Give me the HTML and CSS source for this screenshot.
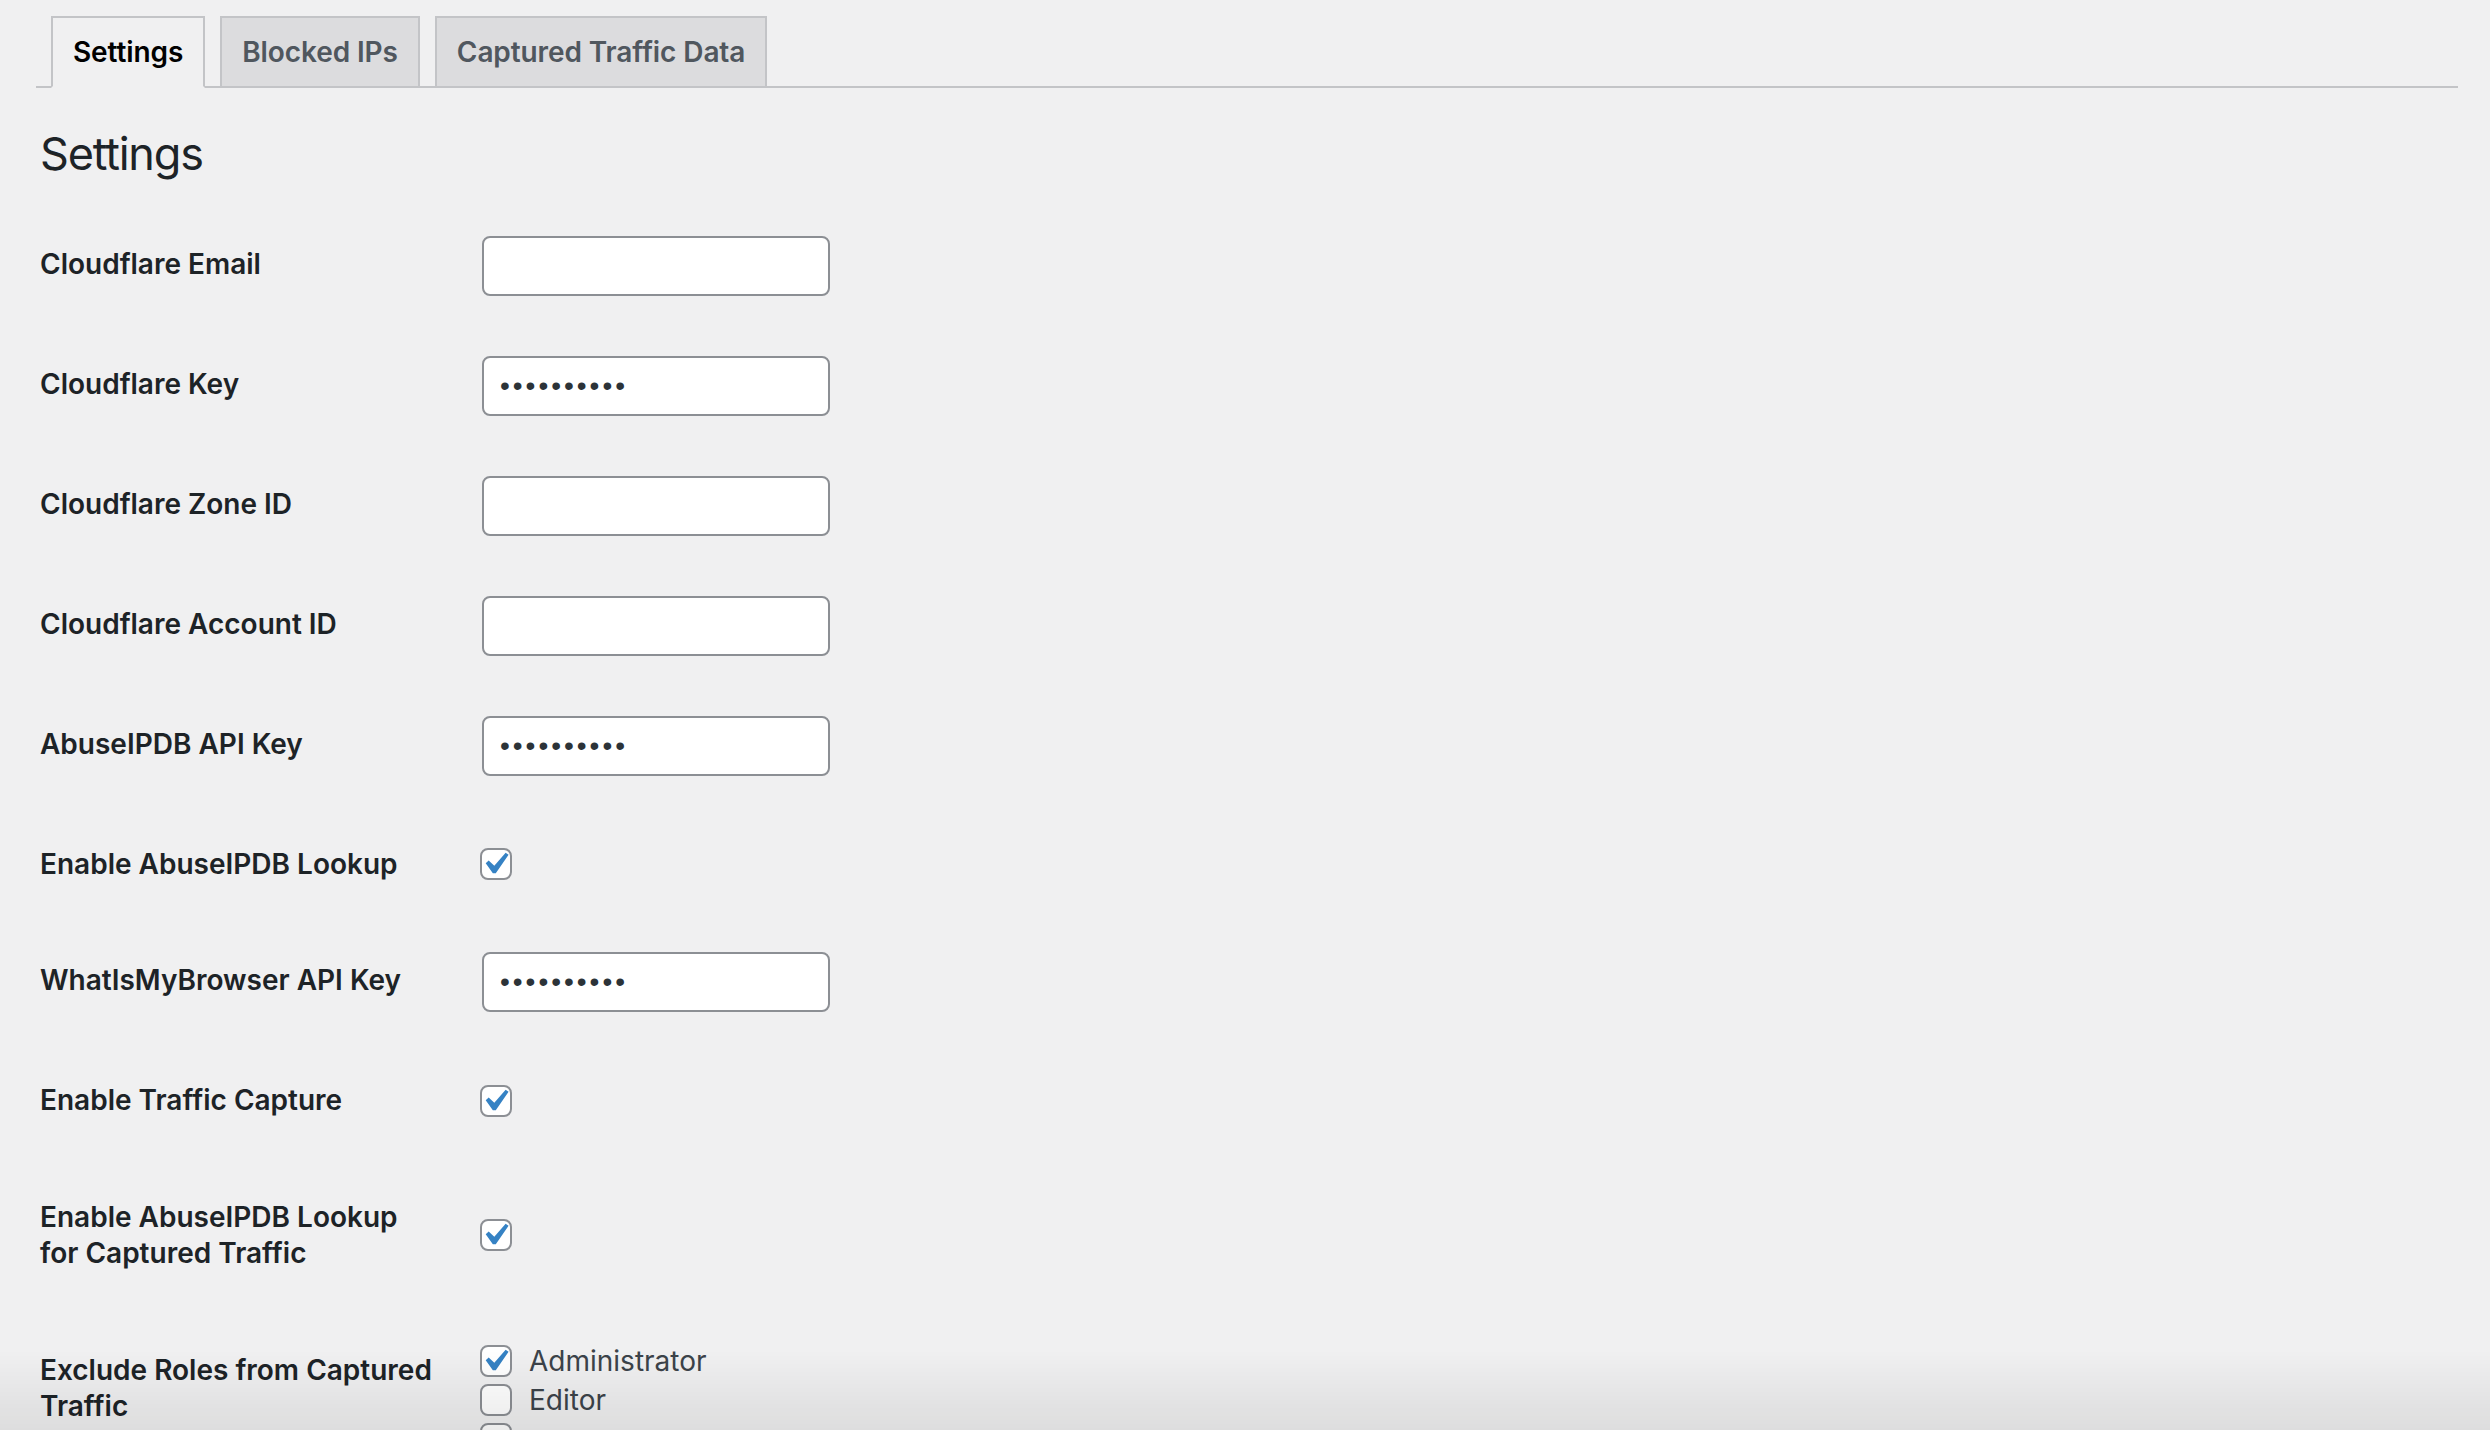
FILE: index.html
```html
<!DOCTYPE html>
<html>
<head>
  <meta charset="utf-8">
  <link rel="stylesheet" href="styles.css">
  <title>Settings</title>
</head>
<body>
  <div class="wrap">
    <h2 class="nav-tab-wrapper">
      <a class="nav-tab nav-tab-active">Settings</a>
      <a class="nav-tab">Blocked IPs</a>
      <a class="nav-tab">Captured Traffic Data</a>
    </h2>

    <h1>Settings</h1>

    <form class="form-table">
      <div class="row">
        <label class="th">Cloudflare Email</label>
        <div class="td"><input type="text" class="field"></div>
      </div>
      <div class="row">
        <label class="th">Cloudflare Key</label>
        <div class="td"><input type="password" class="field" value="0123456789"></div>
      </div>
      <div class="row">
        <label class="th">Cloudflare Zone ID</label>
        <div class="td"><input type="text" class="field"></div>
      </div>
      <div class="row">
        <label class="th">Cloudflare Account ID</label>
        <div class="td"><input type="text" class="field"></div>
      </div>
      <div class="row">
        <label class="th">AbuseIPDB API Key</label>
        <div class="td"><input type="password" class="field" value="0123456789"></div>
      </div>
      <div class="row">
        <label class="th">Enable AbuseIPDB Lookup</label>
        <div class="td">
          <span class="check"><svg viewBox="0 0 20 20"><path d="M14.83 4.89l1.34.94-5.81 8.38H9.02L5.78 9.67l1.34-1.25 2.57 2.4z"/></svg></span>
        </div>
      </div>
      <div class="row">
        <label class="th">WhatIsMyBrowser API Key</label>
        <div class="td"><input type="password" class="field" value="0123456789"></div>
      </div>
      <div class="row">
        <label class="th">Enable Traffic Capture</label>
        <div class="td">
          <span class="check"><svg viewBox="0 0 20 20"><path d="M14.83 4.89l1.34.94-5.81 8.38H9.02L5.78 9.67l1.34-1.25 2.57 2.4z"/></svg></span>
        </div>
      </div>
      <div class="row">
        <label class="th">Enable AbuseIPDB Lookup for Captured Traffic</label>
        <div class="td">
          <span class="check"><svg viewBox="0 0 20 20"><path d="M14.83 4.89l1.34.94-5.81 8.38H9.02L5.78 9.67l1.34-1.25 2.57 2.4z"/></svg></span>
        </div>
      </div>
      <div class="row">
        <label class="th">Exclude Roles from Captured Traffic</label>
        <div class="td roles">
          <label class="opt"><span class="check"><svg viewBox="0 0 20 20"><path d="M14.83 4.89l1.34.94-5.81 8.38H9.02L5.78 9.67l1.34-1.25 2.57 2.4z"/></svg></span>Administrator</label>
          <label class="opt"><span class="check"></span>Editor</label>
          <label class="opt"><span class="check"></span></label>
        </div>
      </div>
    </form>
  </div>
  <div class="bottom-shade"></div>
</body>
</html>
```

FILE: styles.css
```css
html, body {
  margin: 0;
  background: #f0f0f1;
  font-family: Inter, "Noto Sans", sans-serif;
  color: #3c434a;
  overflow: hidden;
}
.wrap {
  margin: 0 32px 0 36px;
}
.nav-tab-wrapper {
  display: flex;
  margin: 0;
  padding: 16px 0 0 0;
  border-bottom: 2px solid #c3c4c7;
}
.nav-tab {
  margin-left: 15px;
  padding: 10px 20px;
  font-size: 28px;
  line-height: 48px;
  font-weight: 600;
  letter-spacing: -0.1px;
  color: #50575e;
  background: #dcdcde;
  border: 2px solid #c3c4c7;
  border-bottom: none;
}
.nav-tab-active {
  color: #000;
  background: #f0f0f1;
  margin-bottom: -2px;
  border-bottom: 2px solid #f0f0f1;
}
h1 {
  margin: 36px 0 0 4px;
  font-size: 45px;
  line-height: 60px;
  font-weight: 400;
  letter-spacing: -1.2px;
  color: #1d2327;
}
.form-table {
  margin: 22px 0 0 4px;
}
.row {
  display: flex;
}
.th {
  width: 400px;
  flex: none;
  padding: 40px 20px 40px 0;
  font-size: 28px;
  line-height: 1.3;
  font-weight: 600;
  color: #1d2327;
}
.td {
  display: flex;
  align-items: center;
  padding: 30px 20px;
}
.field {
  box-sizing: border-box;
  width: 348px;
  height: 60px;
  margin: 0 2px;
  padding: 0 16px;
  border: 2px solid #8c8f94;
  border-radius: 8px;
  background: #fff;
  color: #2c3338;
  font-family: Inter, sans-serif;
  font-size: 28px;
  outline: none;
}
.field[type=password] {
  font-family: "Liberation Sans", Arial, sans-serif;
  letter-spacing: 3px;
}
.check {
  box-sizing: border-box;
  display: block;
  flex: none;
  width: 32px;
  height: 32px;
  border: 2px solid #8c8f94;
  border-radius: 8px;
  background: #fff;
}
.check svg {
  display: block;
  width: 44px;
  height: 44px;
  margin: -8px 0 0 -9px;
  fill: #3582c4;
}
.roles {
  display: block;
}
.opt {
  display: flex;
  align-items: center;
  height: 39px;
  font-size: 28px;
  color: #3c434a;
}
.opt .check {
  margin-right: 17px;
}
.bottom-shade {
  position: fixed;
  left: 0;
  right: 0;
  bottom: 0;
  height: 80px;
  background: linear-gradient(to bottom, rgba(0,0,0,0), rgba(0,0,0,0.08));
  pointer-events: none;
}
```
